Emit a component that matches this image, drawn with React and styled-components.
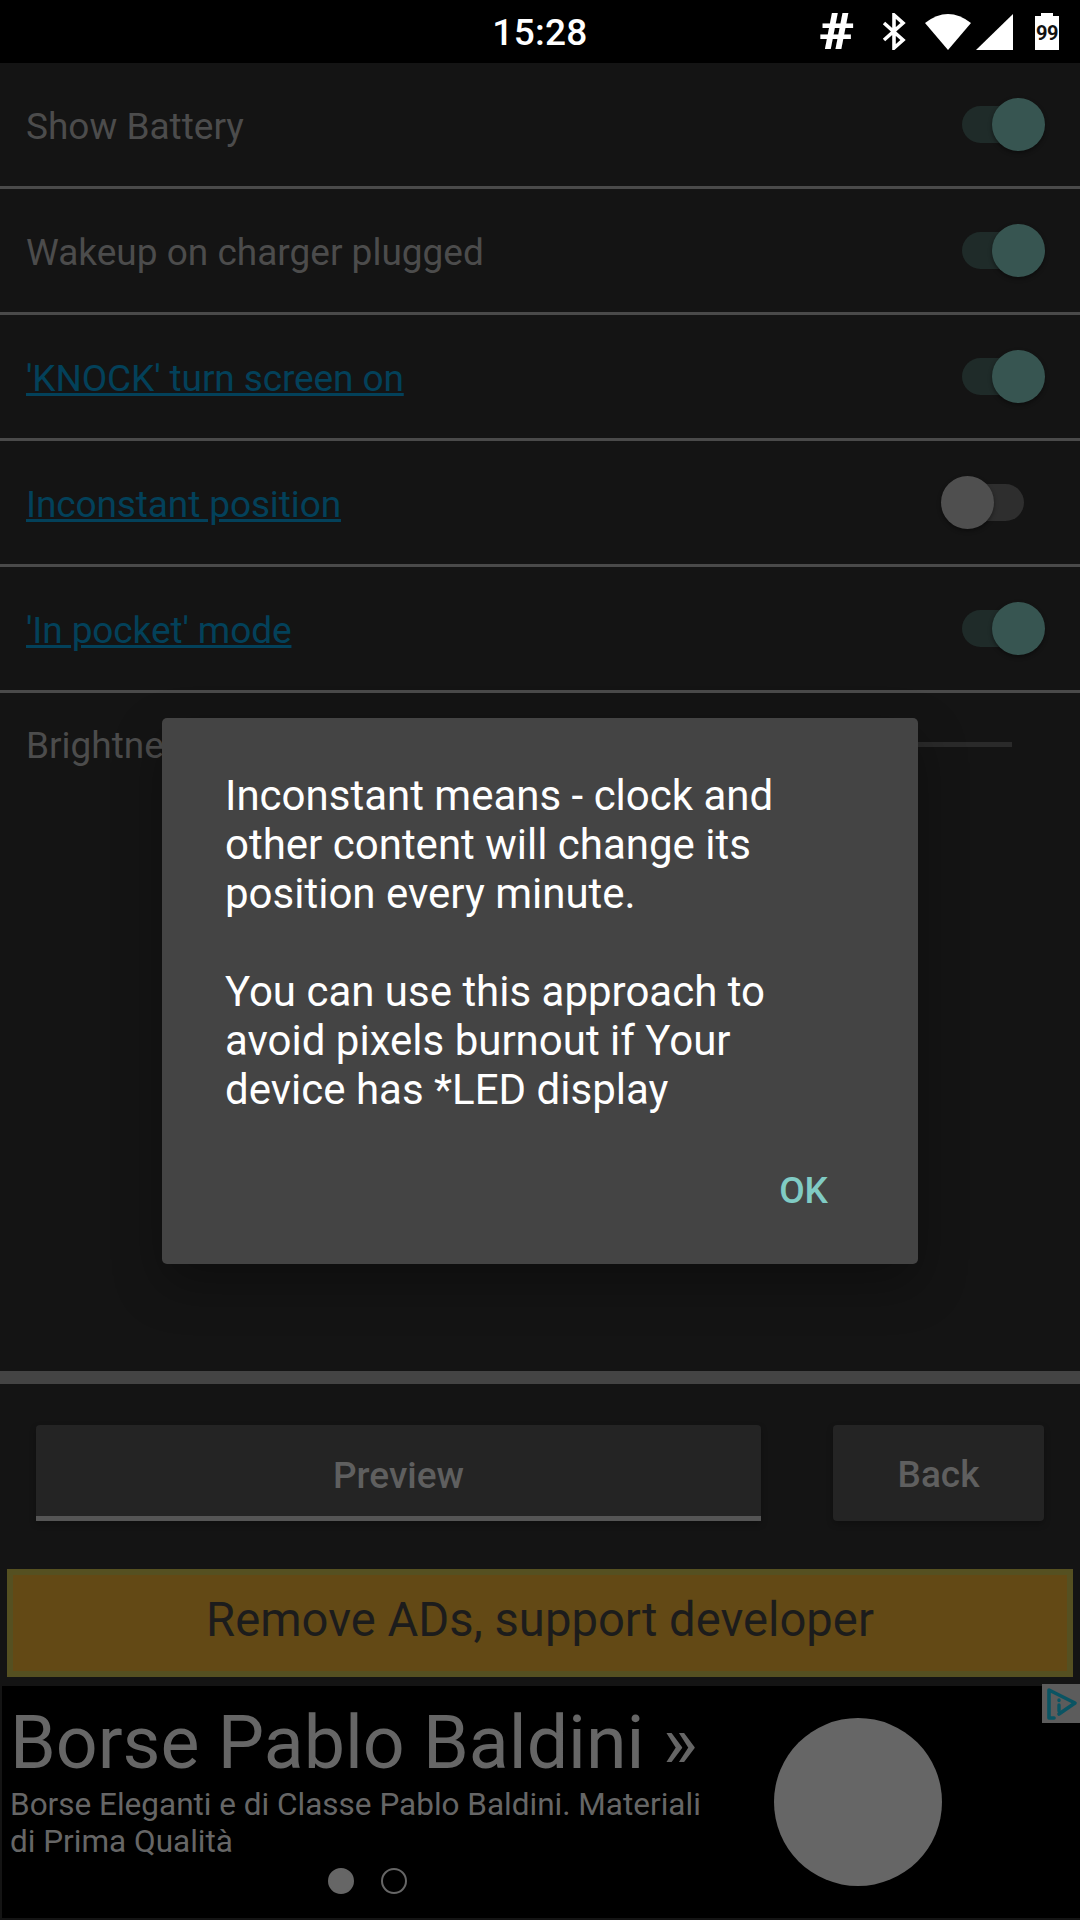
import React from "react";
import styled, { createGlobalStyle } from "styled-components";

const GlobalStyle = createGlobalStyle`
	html, body {
		margin: 0;
		padding: 0;
		background: #141414;
	}
	* {
		box-sizing: border-box;
	}
`;

const Page = styled.div`
	position: relative;
	width: 1080px;
	height: 1920px;
	overflow: hidden;
	display: flex;
	flex-direction: column;
	background: #141414;
	font-family: Roboto, "Liberation Sans", sans-serif;
`;

const StatusBar = styled.div`
	height: 63px;
	flex: none;
	background: #000;
	color: #fff;
	display: grid;
	grid-template-columns: 1fr auto 1fr;
	align-items: center;
`;

const Clock = styled.div`
	grid-column: 2;
	font-size: 37px;
	font-weight: 500;
	letter-spacing: 0.3px;
	padding-top: 2px;
`;

const StatusIcons = styled.div`
	grid-column: 3;
	display: flex;
	align-items: center;
	justify-content: flex-end;
	padding-right: 21px;
	height: 63px;
`;

const Hash = styled.span`
	font-size: 50px;
	font-weight: 900;
	line-height: 1;
	width: 34px;
	margin-right: 28px;
	text-align: center;
	transform: scaleX(1.2);
`;

const StatusSvg = styled.svg`
	display: block;
	flex: none;
	margin-right: ${(props) => props.$gap || 0}px;
`;

const Battery = styled.div`
	position: relative;
	width: 24px;
	height: 34px;
	margin-top: 3px;
	background: #fff;
	color: #111;
	font-size: 20px;
	font-weight: 700;
	text-align: center;
	line-height: 34px;
	letter-spacing: -0.5px;
	&::before {
		content: "";
		position: absolute;
		top: -3px;
		left: 6px;
		width: 12px;
		height: 3px;
		background: #fff;
	}
`;

const Row = styled.div`
	height: 126px;
	flex: none;
	display: flex;
	align-items: center;
	justify-content: space-between;
	padding: 0 35px 0 26px;
	border-bottom: 3px solid #4a4a4a;
`;

const Label = styled.span`
	font-size: 37px;
	color: #4c4c4c;
	margin-top: 3px;
`;

const LinkLabel = styled(Label)`
	color: #03415a;
	letter-spacing: -0.11px;
	text-decoration: underline;
`;

const Track = styled.div`
	position: relative;
	width: 62px;
	height: 37px;
	margin-right: 21px;
	border-radius: 19px;
	background: ${(props) => (props.$on ? "#1f2b29" : "#2e2e2e")};
`;

const Thumb = styled.div`
	position: absolute;
	top: -8px;
	left: ${(props) => (props.$on ? "30px" : "-21px")};
	width: 53px;
	height: 53px;
	border-radius: 50%;
	background: ${(props) => (props.$on ? "#375551" : "#4f4f4f")};
	box-shadow: 0 2px 4px rgba(0, 0, 0, 0.4);
`;

const BrightnessRow = styled.div`
	flex: 1;
	display: flex;
	justify-content: space-between;
	padding: 28px 68px 0 26px;
`;

const SliderLine = styled.div`
	width: 400px;
	height: 5px;
	margin-top: 21px;
	background: #2a2a2a;
`;

const ThickDivider = styled.div`
	height: 13px;
	flex: none;
	background: #444;
`;

const ButtonBar = styled.div`
	height: 185px;
	flex: none;
	display: flex;
	justify-content: space-between;
	padding: 41px 36px 0;
`;

const FlatButton = styled.div`
	height: 96px;
	width: ${(props) => props.$width}px;
	display: flex;
	align-items: center;
	justify-content: center;
	background: #242424;
	color: #5f5f5f;
	font-size: 37px;
	font-weight: 500;
	padding-top: ${(props) => (props.$active ? "9px" : "2px")};
	border-radius: ${(props) => (props.$active ? "4px 4px 0 0" : "4px")};
	border-bottom: ${(props) => (props.$active ? "5px solid #555" : "0")};
	box-shadow: 0 3px 6px rgba(0, 0, 0, 0.25);
`;

const RemoveAds = styled.div`
	height: 108px;
	flex: none;
	margin: 0 7px;
	padding-bottom: 6px;
	display: flex;
	align-items: center;
	justify-content: center;
	background: #634915;
	border: 6px solid #555021;
	color: #1c1c1c;
	font-size: 47.2px;
`;

const AdBanner = styled.div`
	position: relative;
	height: 232px;
	flex: none;
	margin: 9px 0 2px 2px;
	background: #000;
	display: flex;
`;

const AdText = styled.div`
	width: 772px;
	flex: none;
	padding: 12px 0 0 8px;
	color: #666;
	display: flex;
	flex-direction: column;
`;

const AdTitle = styled.div`
	font-size: 73.5px;
	line-height: 90px;
	white-space: nowrap;
`;

const AdDesc = styled.div`
	font-size: 31.5px;
	line-height: 37px;
	margin-top: -2px;
	width: 720px;
`;

const Dots = styled.div`
	display: flex;
	gap: 27px;
	margin-top: 8px;
	padding-left: 318px;
`;

const Dot = styled.div`
	width: 26px;
	height: 26px;
	border-radius: 50%;
	background: ${(props) => (props.$filled ? "#666" : "transparent")};
	border: 2px solid #666;
`;

const AdCircle = styled.div`
	width: 168px;
	height: 168px;
	margin-top: 32px;
	border-radius: 50%;
	background: #666;
`;

const AdChoice = styled.div`
	position: absolute;
	top: -2px;
	right: 0;
	width: 38px;
	height: 39px;
	background: #5c5c5c;
`;

const Dialog = styled.div`
	position: absolute;
	left: 162px;
	top: 718px;
	width: 756px;
	height: 546px;
	padding: 53px 63px 0;
	background: #444;
	border-radius: 5px;
	box-shadow: 0 20px 50px rgba(0, 0, 0, 0.3);
	display: flex;
	flex-direction: column;
`;

const Message = styled.div`
	color: #fff;
	font-size: 42px;
	line-height: 49px;
	width: 600px;
	white-space: pre-line;
`;

const OkButton = styled.div`
	margin-top: auto;
	margin-right: 27px;
	margin-bottom: 52px;
	align-self: flex-end;
	color: #80cbc4;
	font-size: 37px;
	font-weight: 500;
`;

const rows = [
	{ text: "Show Battery", on: true },
	{ text: "Wakeup on charger plugged", on: true },
	{ text: "'KNOCK' turn screen on", on: true, link: true },
	{ text: "Inconstant position", on: false, link: true },
	{ text: "'In pocket' mode", on: true, link: true },
];

function Switch({ on }) {
	return (
		<Track $on={on}>
			<Thumb $on={on} />
		</Track>
	);
}

function StatusBarIcons() {
	return (
		<StatusIcons>
			<Hash>#</Hash>
			<StatusSvg $gap={19} width="24" height="37" viewBox="0 0 24 37">
				<path
					d="M2 10 L21 27 L12 35 V2 L21 10 L2 27"
					fill="none"
					stroke="#fff"
					strokeWidth="3.6"
				/>
			</StatusSvg>
			<StatusSvg $gap={5} width="46" height="36" viewBox="0 0 46 36">
				<path d="M0 9 Q23 -9 46 9 L23 36 Z" fill="#fff" />
			</StatusSvg>
			<StatusSvg $gap={22} width="37" height="36" viewBox="0 0 37 36">
				<path d="M37 0 V36 H0 Z" fill="#fff" />
			</StatusSvg>
			<Battery>99</Battery>
		</StatusIcons>
	);
}

export default function App() {
	return (
		<Page>
			<GlobalStyle />
			<StatusBar>
				<Clock>15:28</Clock>
				<StatusBarIcons />
			</StatusBar>
			{rows.map((row) => (
				<Row key={row.text}>
					{row.link ? (
						<LinkLabel>{row.text}</LinkLabel>
					) : (
						<Label>{row.text}</Label>
					)}
					<Switch on={row.on} />
				</Row>
			))}
			<BrightnessRow>
				<Label>Brightness</Label>
				<SliderLine />
			</BrightnessRow>
			<ThickDivider />
			<ButtonBar>
				<FlatButton $width={725} $active>
					Preview
				</FlatButton>
				<FlatButton $width={211}>Back</FlatButton>
			</ButtonBar>
			<RemoveAds>Remove ADs, support developer</RemoveAds>
			<AdBanner>
				<AdText>
					<AdTitle>Borse Pablo Baldini »</AdTitle>
					<AdDesc>
						Borse Eleganti e di Classe Pablo Baldini. Materiali di Prima
						Qualità
					</AdDesc>
					<Dots>
						<Dot $filled />
						<Dot />
					</Dots>
				</AdText>
				<AdCircle />
				<AdChoice>
					<svg width="38" height="39" viewBox="0 0 38 39">
						<path
							d="M12 34 H7 V6 L33 19 L17 30"
							fill="none"
							stroke="#0a5463"
							strokeWidth="3.6"
							strokeLinecap="round"
							strokeLinejoin="round"
						/>
						<path
							d="M17 21 V27 M17 16 V16.5"
							stroke="#0a5463"
							strokeWidth="3.4"
							strokeLinecap="round"
						/>
					</svg>
				</AdChoice>
			</AdBanner>
			<Dialog>
				<Message>
					{"Inconstant means - clock and other content will change its position every minute.\n\nYou can use this approach to avoid pixels burnout if Your device has *LED display"}
				</Message>
				<OkButton>OK</OkButton>
			</Dialog>
		</Page>
	);
}
